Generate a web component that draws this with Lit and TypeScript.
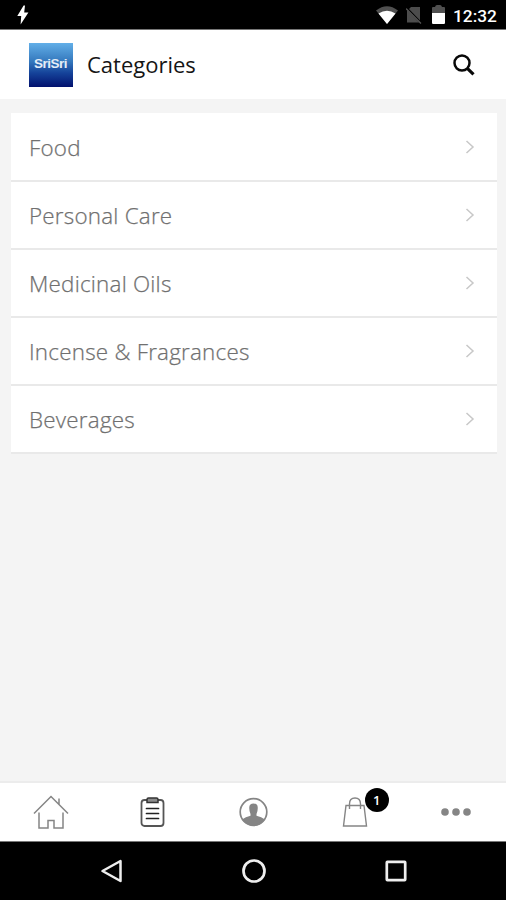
import { LitElement, html, css, svg } from "lit";
import { customElement, property } from "lit/decorators.js";

@customElement("status-bar")
class StatusBar extends LitElement {
  static styles = css`
    :host { display: flex; box-sizing: border-box; height: 30px; background: #000; border-bottom: 1px solid #777; align-items: center; padding: 0 9px 0 16px; }
    svg { display: block; flex: none; }
    .space { flex: 1; }
    .wifi { margin-right: 8px; }
    .sim { margin-right: 10px; }
    .battery { margin-right: 8px; }
    .time { color: #fff; font: 500 17.3px/20px Roboto, sans-serif; width: 44px; white-space: nowrap; margin-top: 2px; }
  `;
  render() {
    return html`
      <svg width="14" height="20" viewBox="0 0 14 20"><path d="M7.600 0.500 L1.300 11 H5.200 L4.600 19.500 L12.400 7.600 H8.200 L9 0.500 Z" fill="#fff"/></svg>
      <span class="space"></span>
      <svg class="wifi" width="22" height="18" viewBox="0 0 22 18"><path d="M0 4.500 Q11 -4 22 4.500 L11 18 Z" fill="#505050"/><path d="M2.500 7.500 Q11 2 19.500 7.500 L11 18 Z" fill="#fff"/></svg>
      <svg class="sim" width="16" height="18" viewBox="0 0 16 18"><path d="M5 1 H14 V16.500 H1 V5 Z" fill="#4c4c4c"/><path d="M0 1.500 L15.500 17.500" stroke="#000" stroke-width="2.200"/><path d="M0 2.500 L15 17.500" stroke="#555" stroke-width="1.300"/></svg>
      <svg class="battery" width="13" height="19" viewBox="0 0 13 19"><path d="M0 9 V3 Q0 2 1 2 H3 Q3.500 0 5 0 H8 Q9.500 0 10 2 H12 Q13 2 13 3 V9 Z" fill="#505050"/><path d="M0 8 H13 V17.500 Q13 19 12 19 H1 Q0 19 0 17.500 Z" fill="#fff"/></svg>
      <span class="time">12:32</span>`;
  }
}

@customElement("app-header")
class AppHeader extends LitElement {
  static styles = css`
    :host { display: flex; box-sizing: border-box; height: 69px; background: #fff; align-items: center; padding: 0 31px 0 29px; }
    .logo { width: 44px; height: 44px; background: linear-gradient(#62afe8, #3478bd 42%, #15439a 68%, #02116e); display: flex; align-items: center; justify-content: center; color: #e4edf7; font: bold 13.5px/14px "Liberation Sans", sans-serif; letter-spacing: -0.5px; padding: 0 1px 1px 0; box-sizing: border-box; }
    .title { flex: 1; margin: 0 0 2px 14px; color: #151515; font: 400 22px/30px "Open Sans", sans-serif; }
    svg { display: block; }
  `;
  render() {
    return html`
      <div class="logo">SriSri</div>
      <div class="title">Categories</div>
      <svg width="22" height="22" viewBox="0 0 22 22" fill="none" stroke="#080808"><circle cx="9" cy="9" r="7.500" stroke-width="2.500"/><path d="M14.300 14.300 L20.500 20.300" stroke-width="3.200"/></svg>`;
  }
}

@customElement("category-row")
class CategoryRow extends LitElement {
  @property() label = "";
  static styles = css`
    :host { display: flex; box-sizing: border-box; height: 68px; background: #fff; border-bottom: 2px solid #e9e9e9; align-items: center; justify-content: space-between; padding: 0 22px 0 18px; color: #707070; font: 300 22.4px/30px "Open Sans", sans-serif; letter-spacing: 0.23px; }
    span { padding-top: 2px; -webkit-text-stroke: 0.25px #707070; }
    svg { display: block; }
  `;
  render() {
    return html`<span>${this.label}</span>
      <svg width="10" height="14" viewBox="0 0 10 14" fill="none" stroke="#c8c8c8" stroke-width="1.500"><path d="M1.500 1 L8 7 L1.500 13"/></svg>`;
  }
}

@customElement("tab-bar")
class TabBar extends LitElement {
  @property({ type: Number }) count = 1;
  static styles = css`
    :host { display: grid; grid-template-columns: repeat(5, 1fr); box-sizing: border-box; height: 61px; background: #fff; border-top: 2px solid #ececec; border-bottom: 1px solid #777; }
    .tab { display: flex; align-items: center; justify-content: center; position: relative; }
    .tab:not(:first-child) { padding-left: 1px; }
    svg { display: block; }
    .badge { position: absolute; left: 61px; top: 5px; width: 24px; height: 24px; border-radius: 50%; background: #000; color: #fff; font: 600 13px/24px "Open Sans", sans-serif; text-align: center; }
  `;
  render() {
    return html`
      <div class="tab"><svg width="36" height="34" viewBox="0 0 36 34" fill="none" stroke="#858585" stroke-width="1.500"><path d="M1 18.500 L18 1.500 L35 18.500 M26 9.500 V3.500 M6 17.500 V33 H15 V25.500 H21 V33 H30 V17.500"/></svg></div>
      <div class="tab"><svg width="26" height="30" viewBox="-1 0 26 30" fill="none"><rect x="1.500" y="3" width="22" height="26" rx="3" stroke="#555" stroke-width="1.800"/><path d="M7 5.500 V2.500 Q7 1 8.500 1 H16.500 Q18 1 18 2.500 V5.500 Z" fill="#8c8c8c" stroke="#333" stroke-width="1.500"/><path d="M6.500 11.500 H18.500 M6.500 16.500 H18.500 M6.500 21.500 H18.500" stroke="#222" stroke-width="1.700" stroke-linecap="round"/></svg></div>
      <div class="tab"><svg width="30" height="30" viewBox="-0.500 0 30 30"><path d="M3.500 22.500 Q7 20 12 18.800 V17 Q10.500 14 10.800 10 Q11 6.500 15 6.500 Q19 6.500 19.200 10 Q19.500 14 18 17 V18.800 Q23 20 26.500 22.500 Q22 29 15 29 Q8 29 3.500 22.500 Z" fill="#858585"/><circle cx="15" cy="15" r="13.300" fill="none" stroke="#858585" stroke-width="1.700"/></svg></div>
      <div class="tab"><svg width="26" height="30" viewBox="0 0 26 30" fill="none" stroke="#858585" stroke-width="1.400"><path d="M4 8.500 H22 L24.500 29 H1.500 Z M7.500 12 V7 Q7.500 1 13 1 Q18.500 1 18.500 7 V12"/></svg><span class="badge">${this.count}</span></div>
      <div class="tab"><svg width="30" height="8" viewBox="0 0 30 8" fill="#858585">${[4, 15, 26].map((x) => svg`<circle cx=${x} cy="4" r="3.800"/>`)}</svg></div>`;
  }
}

@customElement("system-nav")
class SystemNav extends LitElement {
  static styles = css`
    :host { display: flex; height: 58px; background: #000; align-items: center; justify-content: center; gap: 119px; }
    svg { display: block; }
  `;
  render() {
    return html`
      <svg width="23" height="24" viewBox="0 0 23 24" fill="none" stroke="#eee" stroke-width="2.500" stroke-linejoin="round"><path d="M2.500 12 L20.500 2 V22 Z"/></svg>
      <svg width="24" height="24" viewBox="0 0 24 24" fill="none" stroke="#eee" stroke-width="2.700"><circle cx="12" cy="12" r="10.500"/></svg>
      <svg width="22" height="22" viewBox="0 0 22 22" fill="none" stroke="#eee" stroke-width="2.700"><rect x="1.800" y="1.800" width="18.400" height="18.400" rx=".6"/></svg>`;
  }
}

@customElement("app-root")
class AppRoot extends LitElement {
  static styles = css`
    :host { display: flex; flex-direction: column; height: 900px; background: #f4f4f4; overflow: hidden; }
    .list { flex: 1; padding: 14px 9px 0 11px; }
    category-row:first-child { height: 69px; }
  `;
  render() {
    return html`
      <status-bar></status-bar>
      <app-header></app-header>
      <div class="list">
        ${["Food", "Personal Care", "Medicinal Oils", "Incense & Fragrances", "Beverages"].map((c) => html`<category-row .label=${c}></category-row>`)}
      </div>
      <tab-bar></tab-bar>
      <system-nav></system-nav>`;
  }
}
